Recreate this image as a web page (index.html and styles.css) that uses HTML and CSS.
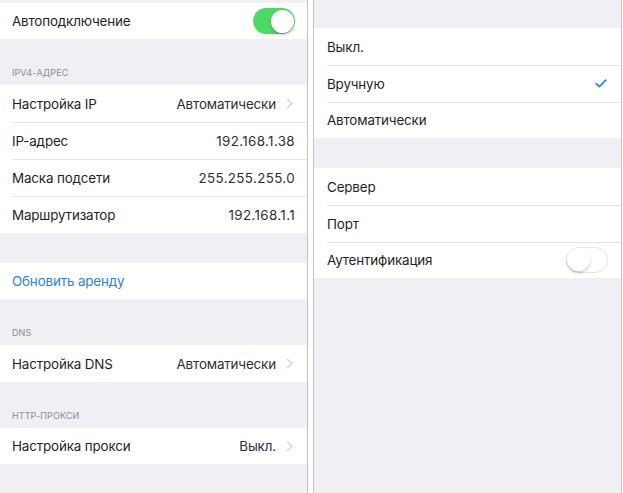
FILE: index.html
```html
<!DOCTYPE html>
<html lang="ru">
<head>
	<meta charset="UTF-8">
	<title>Wi-Fi</title>
	<link rel="stylesheet" href="styles.css">
</head>
<body>

<div class="screens">
	<div class="screen left">
		<div class="gap top3"></div>
		<div class="group">
			<div class="row short">
				<span class="label">Автоподключение</span>
				<span class="switch on"><span class="knob"></span></span>
			</div>
		</div>

		<div class="header">IPV4-АДРЕС</div>
		<div class="group">
			<div class="row">
				<span class="label">Настройка IP</span>
				<span class="value">Автоматически</span>
				<span class="chevron"></span>
			</div>
			<div class="row">
				<span class="label">IP-адрес</span>
				<span class="value num">192.168.1.38</span>
			</div>
			<div class="row">
				<span class="label">Маска подсети</span>
				<span class="value num">255.255.255.0</span>
			</div>
			<div class="row">
				<span class="label">Маршрутизатор</span>
				<span class="value num">192.168.1.1</span>
			</div>
		</div>

		<div class="gap mid"></div>
		<div class="group">
			<div class="row short">
				<span class="label link">Обновить аренду</span>
			</div>
		</div>

		<div class="header">DNS</div>
		<div class="group">
			<div class="row">
				<span class="label">Настройка DNS</span>
				<span class="value">Автоматически</span>
				<span class="chevron"></span>
			</div>
		</div>

		<div class="header">HTTP-ПРОКСИ</div>
		<div class="group">
			<div class="row short">
				<span class="label">Настройка прокси</span>
				<span class="value">Выкл.</span>
				<span class="chevron"></span>
			</div>
		</div>
	</div>

	<div class="screen right">
		<div class="gap top28"></div>
		<div class="group">
			<div class="row">
				<span class="label">Выкл.</span>
			</div>
			<div class="row">
				<span class="label">Вручную</span>
				<svg class="check" width="12" height="9" viewBox="0 0 12 9">
					<path d="M1.2 4.6 L4.3 7.6 L10.8 1.2" fill="none" stroke="#2f80e8" stroke-width="1.8" stroke-linecap="round" stroke-linejoin="round"/>
				</svg>
			</div>
			<div class="row short">
				<span class="label">Автоматически</span>
			</div>
		</div>

		<div class="gap mid"></div>
		<div class="group">
			<div class="row">
				<span class="label">Сервер</span>
			</div>
			<div class="row">
				<span class="label">Порт</span>
			</div>
			<div class="row short">
				<span class="label">Аутентификация</span>
				<span class="switch off"><span class="knob"></span></span>
			</div>
		</div>
	</div>
</div>

</body>
</html>
```

FILE: styles.css
```css
html, body {
	margin: 0;
	padding: 0;
	background: #fff;
}

body {
	font-family: Inter, "Noto Sans", sans-serif;
	color: #1f1f21;
	-webkit-font-smoothing: antialiased;
}

.screens {
	display: flex;
	height: 493px;
	overflow: hidden;
}

.screen {
	background: #efeff4;
	display: flex;
	flex-direction: column;
}

.screen.left {
	width: 307px;
	border-right: 1px solid #c4c4c8;
}

.screen.right {
	width: 307px;
	margin-left: 5px;
	border-left: 1px solid #c4c4c8;
	border-right: 1px solid #c4c4c8;
}

.gap.top3 { height: 3px; }
.gap.top28 { height: 28px; }
.gap.mid { height: 30px; }

.header {
	height: 46px;
	box-sizing: border-box;
	padding: 0 12px 7px;
	display: flex;
	align-items: flex-end;
	font-size: 9px;
	color: #8c8c91;
	letter-spacing: 0.1px;
}

.group {
	background: #fff;
}

.row {
	height: 37px;
	display: flex;
	align-items: center;
	padding: 0 12px;
	position: relative;
	font-size: 13.4px;
	letter-spacing: -0.15px;
}

.right .row {
	padding: 0 13px 0 13px;
}

.row + .row::before {
	content: "";
	position: absolute;
	top: 0;
	left: 12px;
	right: 0;
	height: 1px;
	background: #e4e4e8;
}

.right .row + .row::before {
	left: 13px;
}

.row.short {
	height: 36px;
}

.label {
	flex: 1;
}

.link {
	color: #2d82d6;
}

.value {
	color: #2e2e30;
}

.value.num {
	letter-spacing: 0.35px;
}

.chevron {
	width: 6px;
	height: 6px;
	margin-left: 8px;
	margin-right: 4px;
	border-top: 1.5px solid #c7c7cc;
	border-right: 1.5px solid #c7c7cc;
	transform: rotate(45deg);
}

.switch {
	width: 42px;
	height: 26px;
	box-sizing: border-box;
	border-radius: 13px;
	position: relative;
}

.switch.on {
	background: #4cd964;
}

.switch.off {
	background: #fff;
	border: 1.5px solid #e6e6e9;
}

.switch .knob {
	position: absolute;
	width: 23px;
	height: 23px;
	border-radius: 50%;
	background: #fff;
	box-shadow: 0 2px 3px rgba(0, 0, 0, 0.2);
}

.switch.on .knob {
	top: 1.5px;
	right: 1.5px;
}

.switch.off .knob {
	top: 0;
	left: 0;
}

.check {
	margin-right: 1px;
}
```
